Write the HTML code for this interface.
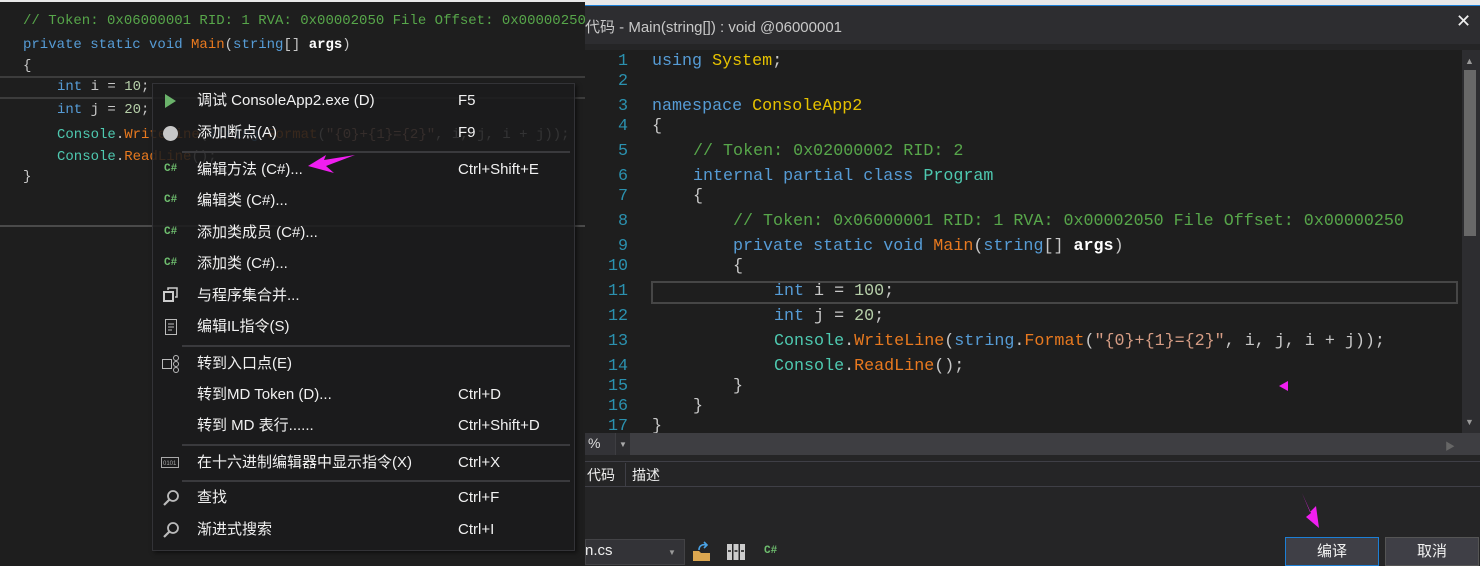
<!DOCTYPE html>
<html><head><meta charset="utf-8"><style>
*{margin:0;padding:0;box-sizing:border-box}
body{width:1480px;height:566px;overflow:hidden;background:#1e1e1e;position:relative;font-family:"Liberation Sans","Noto Sans CJK SC",sans-serif}
.a{position:absolute;white-space:pre}
.code{font-family:"Liberation Mono","Noto Sans CJK SC",monospace}
.L{font-size:14px;line-height:18px}
.R{font-size:16.7px;line-height:20px}
.k{color:#569cd6}.t{color:#4ec9b0}.m{color:#e8791f}.c{color:#57a64a}.n{color:#b5cea8}.s{color:#d69d85}.y{color:#e6c200}.p{color:#c8c8c8}.w{color:#ffffff;font-weight:bold}
.ln{color:#2b91af;text-align:right;width:40px;left:588px}
.mi{color:#f1f1f1;font-size:15px;line-height:20px}
.sep{position:absolute;left:182px;width:388px;height:2px;background:#3a3a3d}
.cs{color:#6fbf6f;font-size:11px;font-weight:bold;font-family:"Liberation Mono",monospace}
</style></head><body>
<div class="a" style="left:0;top:0;width:1480px;height:5px;background:#e8e8e8"></div>
<div class="a" style="left:0;top:2px;width:585px;height:564px;background:#1e1e1e"></div>
<div class="a code L c" style="left:23px;top:12px">// Token: 0x06000001 RID: 1 RVA: 0x00002050 File Offset: 0x00000250</div>
<div class="a code L" style="left:23px;top:36px"><span class="k">private static void </span><span class="m">Main</span><span class="p">(</span><span class="k">string</span><span class="p">[] </span><span class="w">args</span><span class="p">)</span></div>
<div class="a code L p" style="left:23px;top:57px">{</div>
<div class="a" style="left:0;top:76px;width:585px;height:2px;background:#3c3c3c"></div>
<div class="a" style="left:0;top:97px;width:585px;height:2px;background:#3c3c3c"></div>
<div class="a code L" style="left:57px;top:78px"><span class="k">int</span><span class="p"> i = </span><span class="n">10</span><span class="p">;</span></div>
<div class="a code L" style="left:57px;top:101px"><span class="k">int</span><span class="p"> j = </span><span class="n">20</span><span class="p">;</span></div>
<div class="a code L" style="left:57px;top:126px"><span class="t">Console</span><span class="p">.</span><span class="m">WriteLine</span><span class="p">(</span><span class="k">string</span><span class="p">.</span><span class="m">Format</span><span class="p">(</span><span class="s">"{0}+{1}={2}"</span><span class="p">, i, j, i + j));</span></div>
<div class="a code L" style="left:57px;top:148px"><span class="t">Console</span><span class="p">.</span><span class="m">ReadLine</span><span class="p">();</span></div>
<div class="a code L p" style="left:23px;top:168px">}</div>
<div class="a" style="left:0;top:225px;width:585px;height:2px;background:#4a4a4a"></div>
<div class="a" style="left:152px;top:83px;width:423px;height:468px;background:rgba(27,27,28,0.86);border:1px solid #333337;box-shadow:2px 2px 4px rgba(0,0,0,.5)"></div>
<svg class="a" style="left:163px;top:93px" width="14" height="16"><polygon points="2,1 13,8 2,15" fill="#6bb36b"/></svg>
<div class="a" style="left:163px;top:126px;width:15px;height:15px;border-radius:50%;background:#c8c8c8"></div>
<div class="sep" style="top:151px"></div>
<div class="a cs" style="left:164px;top:163px">C#</div>
<div class="a cs" style="left:164px;top:194px">C#</div>
<div class="a cs" style="left:164px;top:226px">C#</div>
<div class="a cs" style="left:164px;top:257px">C#</div>
<svg class="a" style="left:162px;top:286px" width="18" height="18"><rect x="2" y="6" width="9" height="9" fill="none" stroke="#ccc" stroke-width="2"/><path d="M6 4V2h9v9h-2" fill="none" stroke="#ccc" stroke-width="1.5"/></svg>
<svg class="a" style="left:164px;top:318px" width="14" height="18"><rect x="1.5" y="1.5" width="11" height="15" fill="none" stroke="#bbb"/><path d="M4 6h6M4 9h6M4 12h4" stroke="#bbb"/></svg>
<div class="sep" style="top:345px"></div>
<svg class="a" style="left:161px;top:354px" width="20" height="20"><rect x="1.5" y="5.5" width="9" height="9" fill="none" stroke="#bbb"/><circle cx="15" cy="4" r="2.5" fill="none" stroke="#bbb"/><circle cx="15" cy="10" r="2.5" fill="none" stroke="#bbb"/><circle cx="15" cy="16" r="2.5" fill="none" stroke="#bbb"/></svg>
<div class="sep" style="top:444px"></div>
<svg class="a" style="left:161px;top:457px" width="18" height="12"><rect x="0.5" y="0.5" width="17" height="10" fill="none" stroke="#aaa"/><text x="2" y="8" font-size="6" fill="#aaa" font-family="Liberation Sans">0101</text></svg>
<div class="sep" style="top:480px"></div>
<svg class="a" style="left:162px;top:489px" width="18" height="18"><circle cx="11" cy="7" r="5" fill="none" stroke="#bbb" stroke-width="1.8"/><path d="M7.5 10.5L2 16" stroke="#bbb" stroke-width="2.2"/></svg>
<svg class="a" style="left:162px;top:521px" width="18" height="18"><circle cx="11" cy="7" r="5" fill="none" stroke="#bbb" stroke-width="1.8"/><path d="M7.5 10.5L2 16" stroke="#bbb" stroke-width="2.2"/></svg>
<div class="a mi" style="left:197px;top:91px">调试 ConsoleApp2.exe (D)</div><div class="a mi" style="left:458px;top:91px">F5</div>
<div class="a mi" style="left:197px;top:123px">添加断点(A)</div><div class="a mi" style="left:458px;top:123px">F9</div>
<div class="a mi" style="left:197px;top:160px">编辑方法 (C#)...</div><div class="a mi" style="left:458px;top:160px">Ctrl+Shift+E</div>
<div class="a mi" style="left:197px;top:191px">编辑类 (C#)...</div>
<div class="a mi" style="left:197px;top:223px">添加类成员 (C#)...</div>
<div class="a mi" style="left:197px;top:254px">添加类 (C#)...</div>
<div class="a mi" style="left:197px;top:286px">与程序集合并...</div>
<div class="a mi" style="left:197px;top:317px">编辑IL指令(S)</div>
<div class="a mi" style="left:197px;top:354px">转到入口点(E)</div>
<div class="a mi" style="left:197px;top:385px">转到MD Token (D)...</div><div class="a mi" style="left:458px;top:385px">Ctrl+D</div>
<div class="a mi" style="left:197px;top:416px">转到 MD 表行......</div><div class="a mi" style="left:458px;top:416px">Ctrl+Shift+D</div>
<div class="a mi" style="left:197px;top:453px">在十六进制编辑器中显示指令(X)</div><div class="a mi" style="left:458px;top:453px">Ctrl+X</div>
<div class="a mi" style="left:197px;top:488px">查找</div><div class="a mi" style="left:458px;top:488px">Ctrl+F</div>
<div class="a mi" style="left:197px;top:520px">渐进式搜索</div><div class="a mi" style="left:458px;top:520px">Ctrl+I</div>
<svg class="a" style="left:300px;top:150px" width="60" height="30"><polygon points="8,16 26,5 24,10 55,5 26,16 34,23" fill="#f01ef0"/></svg>

<div class="a" style="left:585px;top:5px;width:895px;height:561px;background:#252526"></div>
<div class="a" style="left:585px;top:5px;width:895px;height:1px;background:#1c7fd6"></div>
<div class="a" style="left:585px;top:6px;width:895px;height:38px;background:#2d2d30"></div>
<div class="a" style="left:585px;top:16px;color:#c8c8c8;font-size:15px">代码 - Main(string[]) : void @06000001</div>
<div class="a" style="left:1456px;top:11px;color:#eee;font-size:18px">✕</div>
<div class="a" style="left:585px;top:50px;width:877px;height:383px;background:#1e1e1e"></div>
<div class="a" style="left:1462px;top:50px;width:18px;height:383px;background:#2d2d30"></div>
<div class="a" style="left:1464px;top:70px;width:12px;height:166px;background:#686868"></div>
<div class="a" style="left:1465px;top:56px;color:#999;font-size:9px">▲</div>
<div class="a" style="left:1465px;top:417px;color:#999;font-size:9px">▼</div>
<div class="a" style="left:651px;top:281px;width:807px;height:23px;border:2px solid #464646"></div>
<div class="a code R ln" style="top:52px">1</div>
<div class="a code R ln" style="top:72px">2</div>
<div class="a code R ln" style="top:97px">3</div>
<div class="a code R ln" style="top:117px">4</div>
<div class="a code R ln" style="top:142px">5</div>
<div class="a code R ln" style="top:167px">6</div>
<div class="a code R ln" style="top:187px">7</div>
<div class="a code R ln" style="top:212px">8</div>
<div class="a code R ln" style="top:237px">9</div>
<div class="a code R ln" style="top:257px">10</div>
<div class="a code R ln" style="top:282px">11</div>
<div class="a code R ln" style="top:307px">12</div>
<div class="a code R ln" style="top:332px">13</div>
<div class="a code R ln" style="top:357px">14</div>
<div class="a code R ln" style="top:377px">15</div>
<div class="a code R ln" style="top:397px">16</div>
<div class="a code R ln" style="top:417px">17</div>
<div class="a code R" style="left:652px;top:52px"><span class="k">using </span><span class="y">System</span><span class="p">;</span></div>
<div class="a code R" style="left:652px;top:97px"><span class="k">namespace </span><span class="y">ConsoleApp2</span></div>
<div class="a code R p" style="left:652px;top:117px">{</div>
<div class="a code R c" style="left:693px;top:142px">// Token: 0x02000002 RID: 2</div>
<div class="a code R" style="left:693px;top:167px"><span class="k">internal partial class </span><span class="t">Program</span></div>
<div class="a code R p" style="left:693px;top:187px">{</div>
<div class="a code R c" style="left:733px;top:212px">// Token: 0x06000001 RID: 1 RVA: 0x00002050 File Offset: 0x00000250</div>
<div class="a code R" style="left:733px;top:237px"><span class="k">private static void </span><span class="m">Main</span><span class="p">(</span><span class="k">string</span><span class="p">[] </span><span class="w">args</span><span class="p">)</span></div>
<div class="a code R p" style="left:733px;top:257px">{</div>
<div class="a code R" style="left:774px;top:282px"><span class="k">int</span><span class="p"> i = </span><span class="n">100</span><span class="p">;</span></div>
<div class="a code R" style="left:774px;top:307px"><span class="k">int</span><span class="p"> j = </span><span class="n">20</span><span class="p">;</span></div>
<div class="a code R" style="left:774px;top:332px"><span class="t">Console</span><span class="p">.</span><span class="m">WriteLine</span><span class="p">(</span><span class="k">string</span><span class="p">.</span><span class="m">Format</span><span class="p">(</span><span class="s">"{0}+{1}={2}"</span><span class="p">, i, j, i + j));</span></div>
<div class="a code R" style="left:774px;top:357px"><span class="t">Console</span><span class="p">.</span><span class="m">ReadLine</span><span class="p">();</span></div>
<div class="a code R p" style="left:733px;top:377px">}</div>
<div class="a code R p" style="left:693px;top:397px">}</div>
<div class="a code R p" style="left:652px;top:417px">}</div>
<svg class="a" style="left:1278px;top:380px" width="12" height="12"><polygon points="1,6 10,1 10,11" fill="#f01ef0"/></svg>
<div class="a" style="left:585px;top:433px;width:895px;height:22px;background:#3e3e42"></div>
<div class="a" style="left:585px;top:433px;width:30px;height:22px;background:#333337;color:#ddd;font-size:14px;padding:2px 0 0 3px">%</div>
<div class="a" style="left:616px;top:433px;width:14px;height:22px;background:#2d2d30;color:#aaa;font-size:8px;padding:7px 0 0 3px">▼</div>
<div class="a" style="left:1445px;top:438px;color:#666;font-size:10px">▶</div>
<div class="a" style="left:585px;top:461px;width:895px;height:1px;background:#3f3f46"></div>
<div class="a" style="left:587px;top:465px;color:#eee;font-size:14px">代码</div>
<div class="a" style="left:625px;top:463px;width:1px;height:24px;background:#3f3f46"></div>
<div class="a" style="left:632px;top:465px;color:#eee;font-size:14px">描述</div>
<div class="a" style="left:585px;top:486px;width:895px;height:1px;background:#3f3f46"></div>
<div class="a" style="left:585px;top:539px;width:100px;height:26px;background:#333337;border:1px solid #434346"></div>
<div class="a" style="left:585px;top:542px;color:#eee;font-size:15px">n.cs</div>
<div class="a" style="left:668px;top:548px;color:#999;font-size:8px">▼</div>
<svg class="a" style="left:691px;top:541px" width="22" height="22"><path d="M2 10h6l2 2h9v8H2z" fill="#dca750"/><path d="M8 9c0-4 3-6 7-5M13 1l3 3-3 3" fill="none" stroke="#4aa3e6" stroke-width="1.6"/></svg>
<svg class="a" style="left:726px;top:543px" width="20" height="18"><rect x="1" y="1" width="5" height="16" fill="#ccc"/><rect x="7.5" y="1" width="5" height="16" fill="#ccc"/><rect x="14" y="1" width="5" height="16" fill="#ccc"/><path d="M2 8h3M8.5 8h3M15 8h3" stroke="#444" stroke-width="2"/></svg>
<div class="a cs" style="left:764px;top:545px">C#</div>
<svg class="a" style="left:1298px;top:492px" width="26" height="38"><polygon points="4,1 12,20 18,14 21,36 8,25 13,21" fill="#f01ef0"/></svg>
<div class="a" style="left:1285px;top:537px;width:94px;height:29px;background:#3f3f46;border:1px solid #1c7fd6;color:#f1f1f1;font-size:15px;text-align:center;line-height:27px">编译</div>
<div class="a" style="left:1385px;top:537px;width:94px;height:29px;background:#3f3f46;border:1px solid #555;color:#f1f1f1;font-size:15px;text-align:center;line-height:27px">取消</div>
</body></html>
